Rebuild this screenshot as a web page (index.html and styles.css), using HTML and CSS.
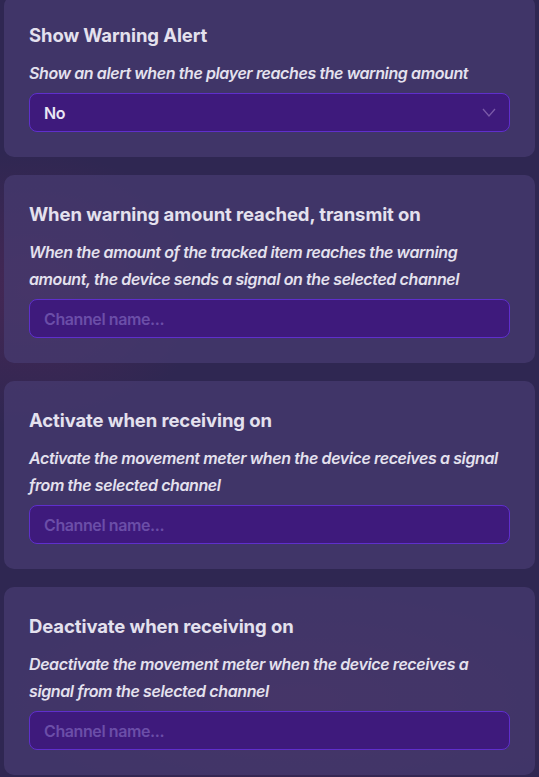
FILE: index.html
```html
<!DOCTYPE html>
<html lang="en">
<head>
<meta charset="utf-8">
<title>Device settings</title>
<link rel="stylesheet" href="styles.css">
</head>
<body>
<div class="list">
  <section class="card">
    <h2 class="title">Show Warning Alert</h2>
    <p class="desc">Show an alert when the player reaches the warning amount</p>
    <div class="field select">
      <span class="value">No</span>
      <svg class="chev" width="14" height="9" viewBox="0 0 14 9"><path d="M1 1 L7 8 L13 1" fill="none" stroke="currentColor" stroke-width="1.3"/></svg>
    </div>
  </section>
  <section class="card">
    <h2 class="title">When warning amount reached, transmit on</h2>
    <p class="desc">When the amount of the tracked item reaches the warning amount, the device sends a signal on the selected channel</p>
    <input class="field input" type="text" placeholder="Channel name...">
  </section>
  <section class="card">
    <h2 class="title">Activate when receiving on</h2>
    <p class="desc">Activate the movement meter when the device receives a signal from the selected channel</p>
    <input class="field input" type="text" placeholder="Channel name...">
  </section>
  <section class="card">
    <h2 class="title">Deactivate when receiving on</h2>
    <p class="desc">Deactivate the movement meter when the device receives a signal from the selected channel</p>
    <input class="field input" type="text" placeholder="Channel name...">
  </section>
</div>
</body>
</html>
```
FILE: styles.css
```css
html, body {
  margin: 0;
  padding: 0;
}
body {
  width: 539px;
  height: 777px;
  overflow: hidden;
  font-family: Inter, "Liberation Sans", sans-serif;
  background:
    radial-gradient(ellipse 180px 140px at 30px 290px, rgba(110, 40, 90, 0.35), rgba(110, 40, 90, 0) 100%),
    radial-gradient(ellipse 320px 120px at 300px 700px, rgba(110, 40, 90, 0.3), rgba(110, 40, 90, 0) 100%),
    #2f2752;
}
.list {
  display: flex;
  flex-direction: column;
  gap: 18px;
  margin: -4px 4px 0 4px;
}
.card {
  background: rgba(70, 60, 112, 0.72);
  border-radius: 10px;
  padding: 28px 25px 25px 25px;
  display: flex;
  flex-direction: column;
}
.title {
  margin: 0 0 14px 0;
  font-size: 18.5px;
  line-height: 22px;
  font-weight: 700;
  color: #e4e1ee;
  letter-spacing: -0.1px;
}
.desc {
  margin: 0 0 6px 0;
  font-size: 16px;
  line-height: 27px;
  font-style: italic;
  font-weight: 600;
  color: #e4e1ee;
  letter-spacing: -0.4px;
}
.field {
  box-sizing: border-box;
  height: 39px;
  width: 100%;
  background: #3e1a7c;
  border: 1px solid #5f2fcc;
  border-radius: 8px;
  font-family: Inter, "Liberation Sans", sans-serif;
  font-size: 16px;
  font-weight: 600;
  letter-spacing: -0.4px;
  padding: 0 14px;
  color: #eae6f4;
  outline: none;
}
.select {
  display: flex;
  align-items: center;
  justify-content: space-between;
}
.chev {
  color: #7a5aa8;
  margin-right: -1px;
}
.input::placeholder {
  color: #6b4ea8;
  opacity: 1;
}
```
